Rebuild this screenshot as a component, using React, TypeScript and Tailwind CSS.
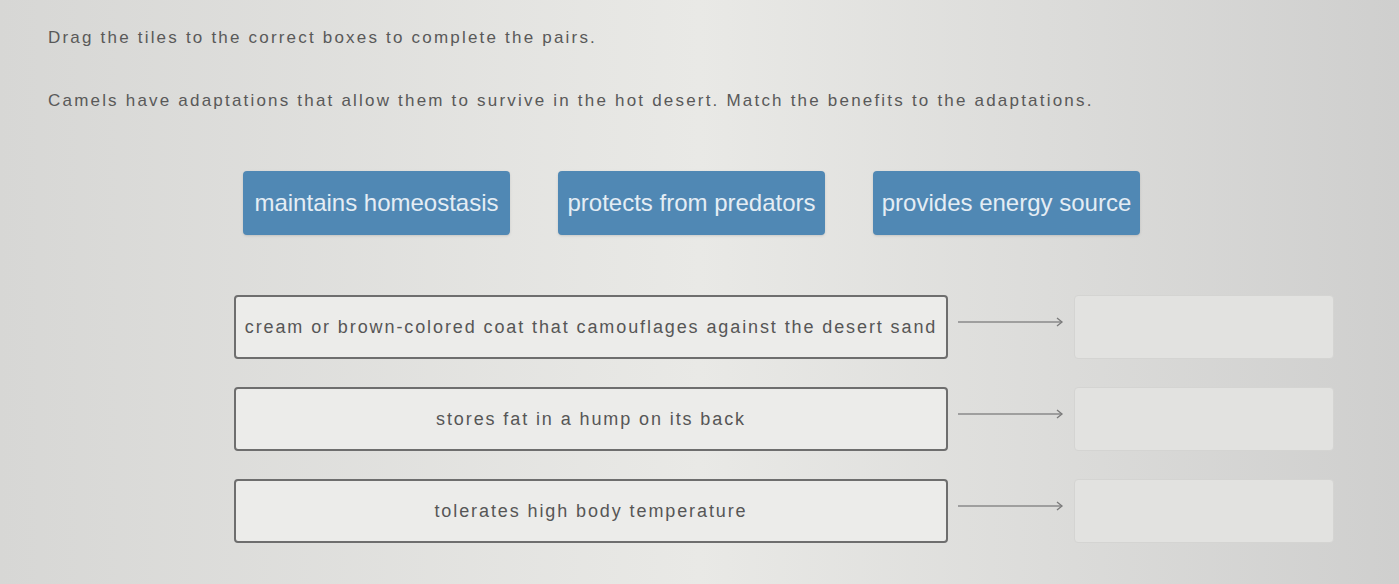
const tiles = ["maintains homeostasis", "protects from predators", "provides energy source"];

const adaptations = [
  "cream or brown-colored coat that camouflages against the desert sand",
  "stores fat in a hump on its back",
  "tolerates high body temperature",
];

const Arrow = () => (
  <svg width="106" height="12" viewBox="0 0 106 12" className="shrink-0">
    <line x1="0" y1="6" x2="104" y2="6" stroke="#8a8a8a" strokeWidth="1.3" />
    <path d="M99 2 L104 6 L99 10" fill="none" stroke="#7a7a7a" strokeWidth="1.3" />
  </svg>
);

const App = () => {
  return (
    <main
      className="h-[584px] w-full overflow-hidden bg-linear-to-r from-[#d7d7d5] via-[#e9e9e6] to-[#cfcfce] px-[48px] pt-[26px] text-[#595959]"
      style={{ fontFamily: '"Liberation Sans", Arial, sans-serif' }}
    >
      <p className="text-[17px] leading-6 tracking-[2.2px]">Drag the tiles to the correct boxes to complete the pairs.</p>
      <p className="mt-[39px] text-[17px] leading-6 tracking-[2.2px]">
        Camels have adaptations that allow them to survive in the hot desert. Match the benefits to the adaptations.
      </p>

      <div className="ml-[195px] mt-[58px] flex gap-12">
        {tiles.map((tile) => (
          <div
            key={tile}
            className="flex h-16 w-[267px] items-center justify-center whitespace-nowrap rounded bg-[#5088b4] text-[24px] text-[#e4edf4] shadow-sm"
          >
            {tile}
          </div>
        ))}
      </div>

      <div className="ml-[186px] mt-[60px] flex flex-col gap-7">
        {adaptations.map((item) => (
          <div key={item} className="flex items-center">
            <div className="flex h-16 w-[714px] items-center justify-center whitespace-nowrap rounded border-2 border-[#6e6e6e] bg-[#ececea] text-[18px] tracking-[1.9px] text-[#565656]">
              {item}
            </div>
            <div className="ml-[10px] mr-[10px] -mt-[10px]">
              <Arrow />
            </div>
            <div className="h-16 w-[260px] rounded border border-[#d4d4d2] bg-[#e2e2e0]" />
          </div>
        ))}
      </div>
    </main>
  );
};

export default App;
